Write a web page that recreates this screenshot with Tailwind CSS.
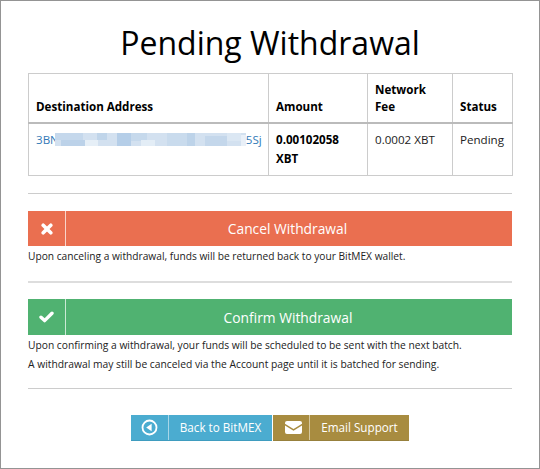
<!DOCTYPE html>
<html>
<head>
<meta charset="utf-8">
<script src="https://cdn.jsdelivr.net/npm/@tailwindcss/browser@4"></script>
</head>
<body class="bg-white">
<main class="w-[540px] h-[469px] border border-[#949494] px-[27px] overflow-hidden font-['Open_Sans',sans-serif] text-[#222]">
  <h1 class="h-[72px] pt-[20px] text-center text-[32px] leading-[44px] text-black">Pending Withdrawal</h1>
  <table class="w-[484px] table-fixed border-collapse text-[11.6px]">
    <colgroup><col class="w-[240px]"><col class="w-[99px]"><col class="w-[85px]"><col class="w-[60px]"></colgroup>
    <thead>
      <tr class="h-[49px] font-bold text-black leading-[17px]">
        <th class="border border-[#ccc] border-b-2 border-b-[#bbb] px-[7px] pb-[7px] text-left align-bottom font-bold">Destination Address</th>
        <th class="border border-[#ccc] border-b-2 border-b-[#bbb] px-[7px] pb-[7px] text-left align-bottom font-bold">Amount</th>
        <th class="border border-[#ccc] border-b-2 border-b-[#bbb] px-[7px] pb-[7px] text-left align-bottom font-bold">Network Fee</th>
        <th class="border border-[#ccc] border-b-2 border-b-[#bbb] px-[7px] pb-[7px] text-left align-bottom font-bold">Status</th>
      </tr>
    </thead>
    <tbody>
      <tr class="h-[53px] leading-[19px]">
        <td class="border border-[#ccc] px-[7px] pt-[6px] align-top text-[#337ab7]">
          <span class="flex items-center"><span>3BN</span>
            <svg class="relative -ml-[4px] w-[191px] h-[13px] shrink-0" viewBox="0 0 191 13" aria-hidden="true">
              <rect width="191" height="13" fill="#d3e1f0"/>
              <rect x="0" y="0" width="28" height="7" fill="#c5d8ec"/><rect x="6" y="7" width="24" height="6" fill="#bcd2e9"/>
              <rect x="30" y="7" width="13" height="6" fill="#e6eff7"/><rect x="42" y="0" width="10" height="7" fill="#c0d5ea"/>
              <rect x="62" y="0" width="14" height="13" fill="#b5cee8"/><rect x="76" y="0" width="16" height="8" fill="#c6d9ec"/>
              <rect x="86" y="7" width="14" height="6" fill="#e3edf6"/><rect x="112" y="0" width="20" height="13" fill="#c9dbed"/>
              <rect x="132" y="0" width="8" height="13" fill="#bdd3e9"/><rect x="150" y="3" width="22" height="10" fill="#c4d7eb"/>
              <rect x="172" y="0" width="14" height="8" fill="#dbe7f3"/><rect x="186" y="2" width="5" height="11" fill="#e9f0f8"/>
            </svg><span>5Sj</span></span>
        </td>
        <td class="border border-[#ccc] px-[7px] pt-[6px] align-top font-bold text-black">0.00102058 XBT</td>
        <td class="border border-[#ccc] px-[7px] pt-[6px] align-top">0.0002 XBT</td>
        <td class="border border-[#ccc] px-[7px] pt-[6px] align-top">Pending</td>
      </tr>
    </tbody>
  </table>

  <hr class="mt-[17px] w-[484px] border-t border-[#ccc]">

  <section class="mt-[17px] w-[484px]">
    <button class="flex h-[35px] w-full items-center bg-[#ea6f50] text-white">
      <span class="flex h-full w-[38px] shrink-0 items-center justify-center border-r border-[#f8d5cb]">
        <svg class="w-[12px] h-[12px]" viewBox="0 0 12 12" aria-hidden="true"><path d="M2.2 2.2 L9.8 9.8 M9.8 2.2 L2.2 9.8" stroke="#fff" stroke-width="3.6" stroke-linecap="round"/></svg>
      </span>
      <span class="flex-1 text-center text-[13.8px] leading-[20px] pr-[3px]">Cancel Withdrawal</span>
    </button>
    <p class="mt-[1px] h-[19px] text-[10.2px] leading-[19px]">Upon canceling a withdrawal, funds will be returned back to your BitMEX wallet.</p>
  </section>

  <hr class="mt-[15px] w-[484px] border-t-2 border-[#ddd]">

  <section class="mt-[16px] w-[484px]">
    <button class="flex h-[36px] w-full items-center bg-[#50b271] text-white">
      <span class="flex h-full w-[38px] shrink-0 items-center justify-center border-r border-[#cbe9d5]">
        <svg class="w-[15px] h-[12px]" viewBox="0 0 15 12" aria-hidden="true"><path d="M2 6.2 L5.6 9.6 L13 2.2" fill="none" stroke="#fff" stroke-width="3.4" stroke-linecap="round" stroke-linejoin="round"/></svg>
      </span>
      <span class="flex-1 text-center text-[13.8px] leading-[20px] pr-[2px] pt-[1px]">Confirm Withdrawal</span>
    </button>
    <p class="mt-[1px] text-[10.25px] leading-[19px]">Upon confirming a withdrawal, your funds will be scheduled to be sent with the next batch.</p>
    <p class="text-[10.3px] leading-[19px]">A withdrawal may still be canceled via the Account page until it is batched for sending.</p>
  </section>

  <hr class="mt-[14px] w-[484px] border-t border-[#ccc]">

  <nav class="mt-[26px] flex w-[484px] justify-center gap-[1px] text-[11.7px] text-white">
    <a class="flex h-[26px] w-[141px] items-center bg-[#4bacd0] border-b border-[#3f9cbf]">
      <span class="flex h-full w-[38px] items-center justify-center border-r border-[#a7d6e8]">
        <svg class="w-[17px] h-[17px]" viewBox="0 0 17 17" aria-hidden="true"><circle cx="8.5" cy="8.5" r="7" fill="none" stroke="#fff" stroke-width="1.8"/><path d="M10.6 4.8 V12.2 L5.2 8.5 Z" fill="#fff"/></svg>
      </span>
      <span class="flex-1 text-center">Back to BitMEX</span>
    </a>
    <a class="flex h-[26px] w-[136px] items-center bg-[#a88c40] border-b border-[#97803c]">
      <span class="flex h-full w-[37px] items-center justify-center border-r border-[#d6c89e] pl-[4px]">
        <svg class="w-[17px] h-[13px]" viewBox="0 0 17 13" aria-hidden="true"><path d="M0 2 Q0 0 2 0 H15 Q17 0 17 2 V2.8 L8.5 8 L0 2.8 Z" fill="#fff"/><path d="M0 4.6 L8.5 9.8 L17 4.6 V11 Q17 13 15 13 H2 Q0 13 0 11 Z" fill="#fff"/></svg>
      </span>
      <span class="flex-1 text-center">Email Support</span>
    </a>
  </nav>
</main>
</body>
</html>
